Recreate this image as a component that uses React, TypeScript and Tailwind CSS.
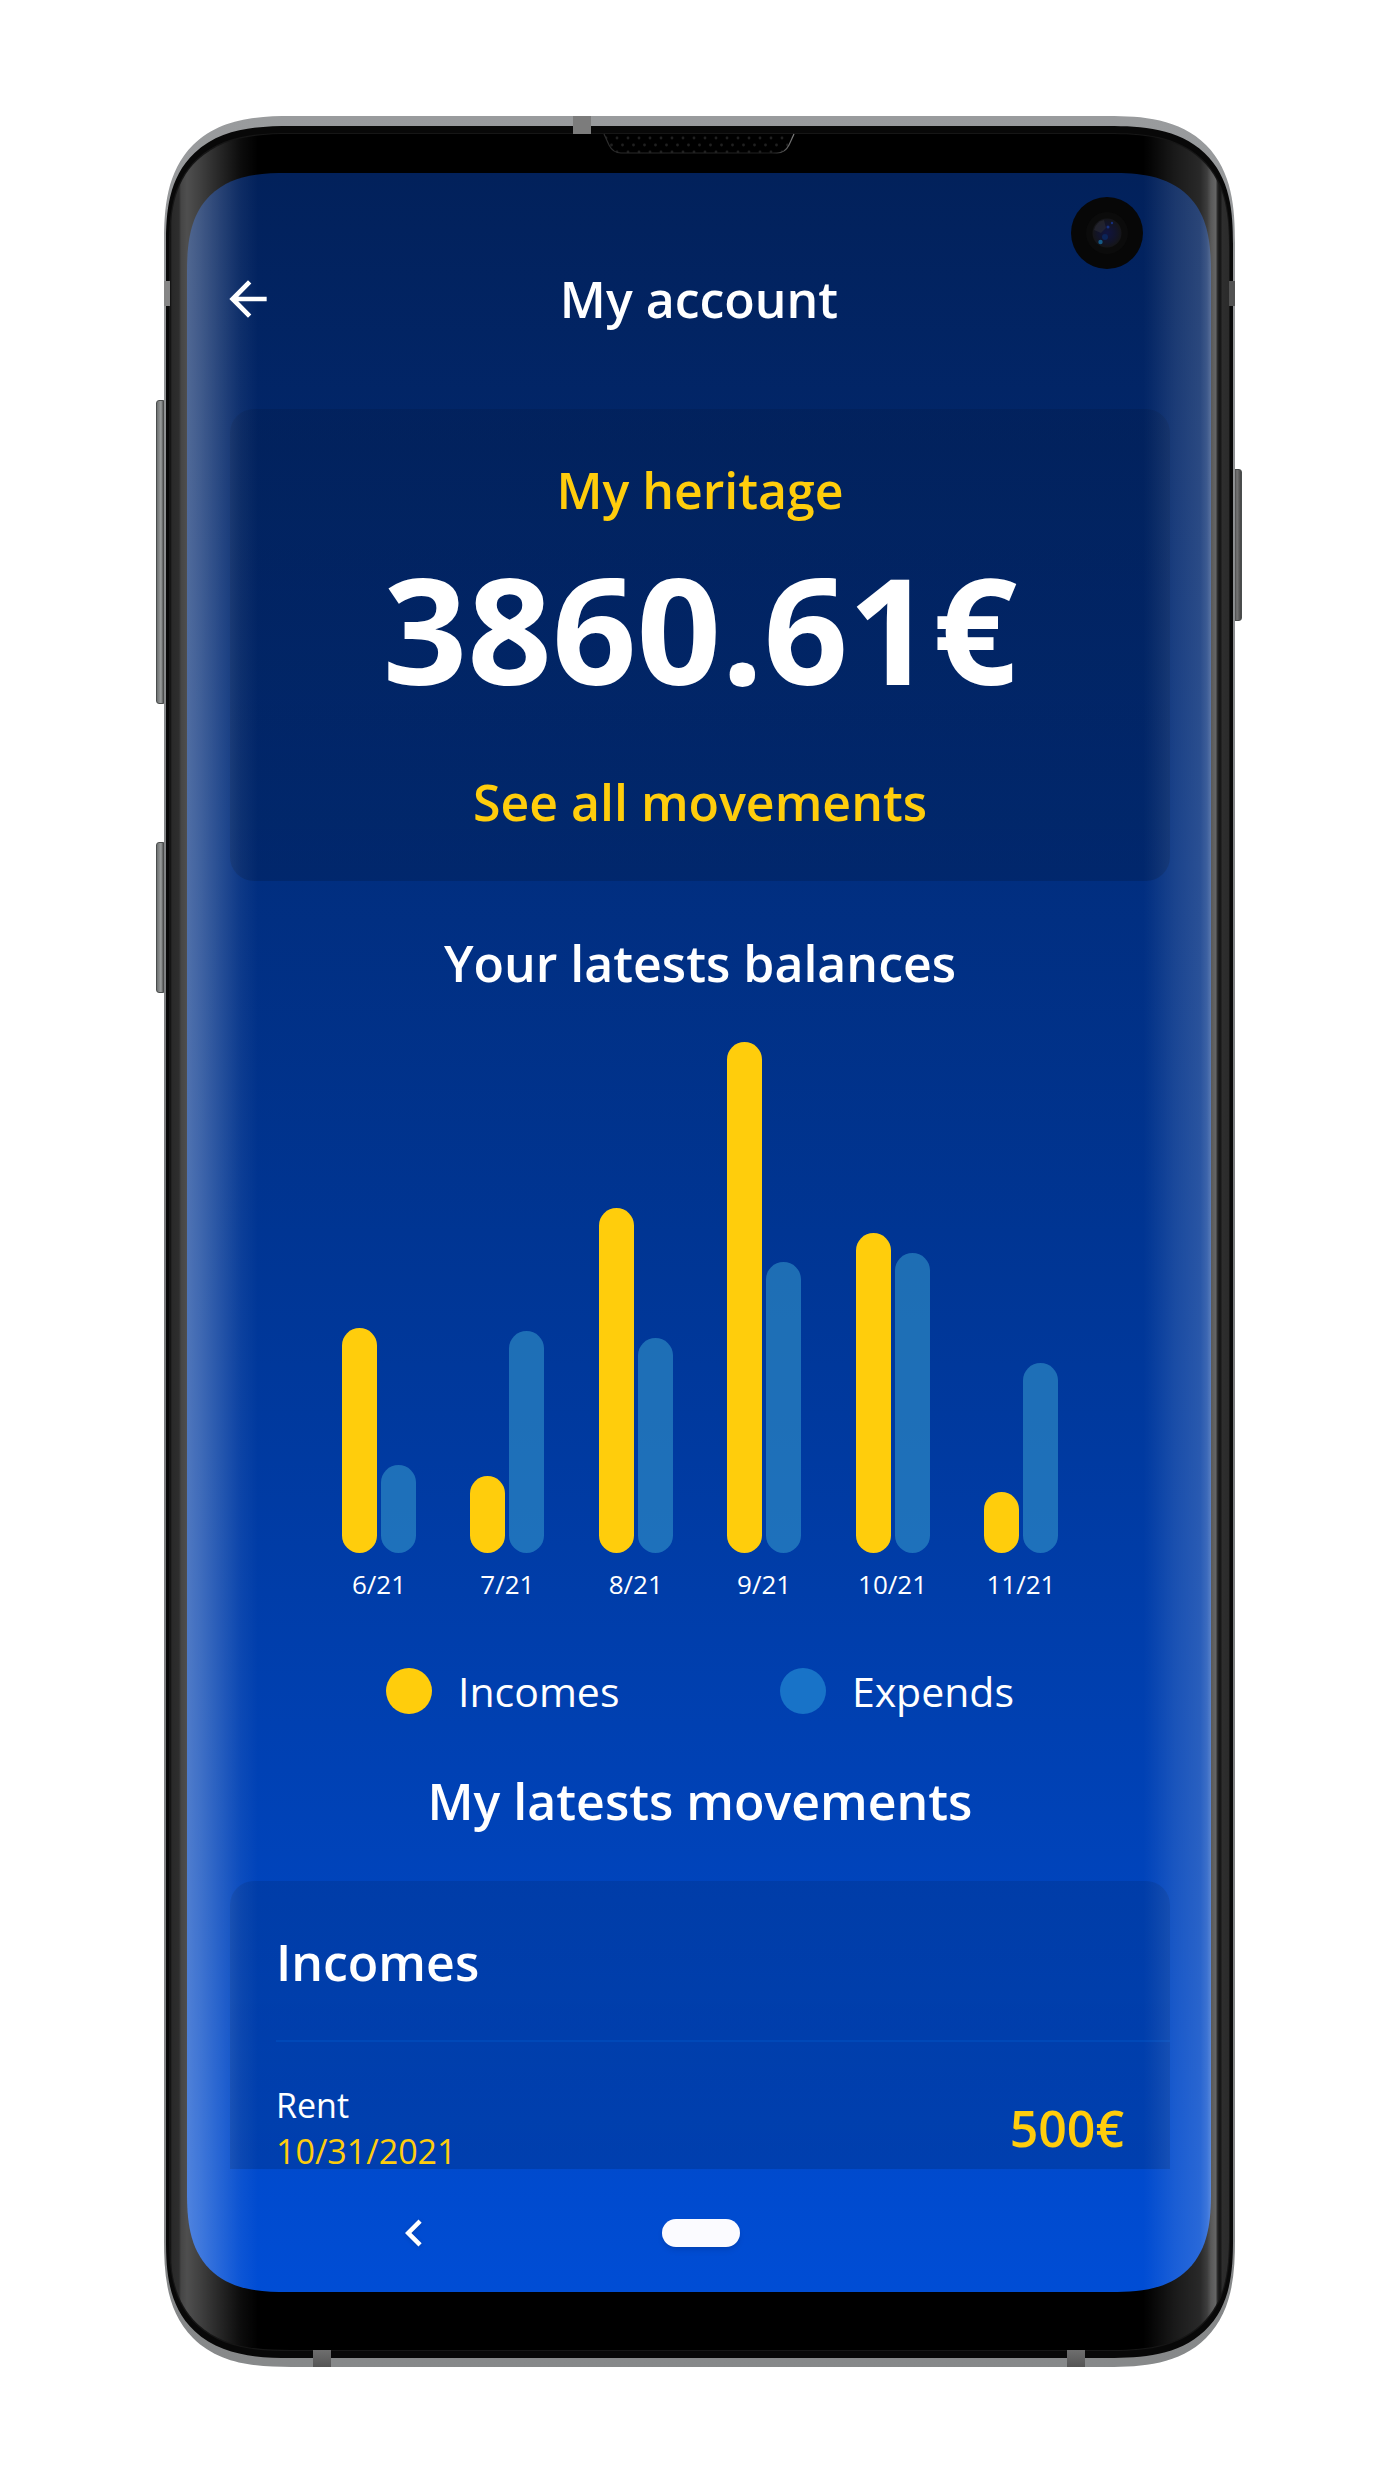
type Balance = { month: string; income: number; expend: number };

const balances: Balance[] = [
  { month: "6/21", income: 225, expend: 88 },
  { month: "7/21", income: 77, expend: 222 },
  { month: "8/21", income: 345, expend: 215 },
  { month: "9/21", income: 511, expend: 291 },
  { month: "10/21", income: 320, expend: 300 },
  { month: "11/21", income: 61, expend: 190 },
];

const heading = "text-[50px] leading-[72px] font-semibold";

function Header() {
  return (
    <header className="grid grid-cols-[56px_1fr_56px] items-center px-[33px] pt-[90px] pb-[74px]">
      <button type="button" aria-label="Back" className="size-14">
        <svg viewBox="0 0 24 24" className="size-14" fill="currentColor" aria-hidden="true">
          <path d="M20 11H7.83l5.59-5.59L12 4l-8 8 8 8 1.41-1.41L7.83 13H20v-2z" />
        </svg>
      </button>
      <h1 className={`${heading} text-center`}>My account</h1>
    </header>
  );
}

function HeritageCard() {
  return (
    <section className="flex flex-col items-center rounded-3xl bg-linear-to-b from-black/10 to-black/15 pt-[45px] pb-[43px]">
      <h2 className={`${heading} text-[#ffcd0c]`}>My heritage</h2>
      <p className="mt-[22px] text-[148px] leading-[160px] font-bold">3860.61€</p>
      <a href="#movements" className={`${heading} mt-[58px] text-[#ffcd0c]`}>
        See all movements
      </a>
    </section>
  );
}

function BalanceChart() {
  return (
    <section className="flex flex-col">
      <h2 className={`${heading} mt-[46px] text-center`}>Your latests balances</h2>
      <div className="mt-[43px] flex items-end justify-between px-28">
        {balances.map((b) => (
          <div key={b.month} className="flex w-[74px] flex-col items-center">
            <div className="flex w-full items-end justify-between">
              <div className="w-[35px] rounded-full bg-[#ffcd0c]" style={{ height: b.income }} />
              <div className="w-[35px] rounded-full bg-[#3295ca]/60" style={{ height: b.expend }} />
            </div>
            <span className="mt-[13px] text-[26px] leading-9 whitespace-nowrap">{b.month}</span>
          </div>
        ))}
      </div>
      <div className="mt-[61px] flex justify-between px-[156px] text-[41px] leading-[56px]">
        <div className="flex items-center gap-[26px]">
          <span className="size-[46px] rounded-full bg-[#ffcd0c]" />
          <span>Incomes</span>
        </div>
        <div className="flex items-center gap-[26px]">
          <span className="size-[46px] rounded-full bg-[#1873c8]" />
          <span>Expends</span>
        </div>
      </div>
    </section>
  );
}

function Movements() {
  return (
    <section id="movements">
      <h2 className={`${heading} mt-[46px] text-center`}>My latests movements</h2>
      <div className="mt-11 rounded-t-3xl bg-linear-to-b from-black/10 to-black/15 pt-[45px] pl-[46px]">
        <h3 className={heading}>Incomes</h3>
        <ul className="mt-[42px] border-t-2 border-[#0048b8]">
          <li className="flex items-center justify-between pt-[45px] pr-[46px]">
            <div className="flex flex-col gap-[10px] text-[34px] leading-9">
              <p>Rent</p>
              <p className="text-[#ffcd0c]">10/31/2021</p>
            </div>
            <span className={`${heading} text-[#ffcd0c]`}>500€</span>
          </li>
        </ul>
      </div>
    </section>
  );
}

function SystemNav() {
  return (
    <nav className="grid h-[123px] grid-cols-3 items-center justify-items-center pt-1 pr-20 pl-[84px]">
      <button type="button" aria-label="System back" className="size-[54px]">
        <svg viewBox="0 0 24 24" className="size-[54px] drop-shadow-sm" fill="currentColor" aria-hidden="true">
          <path d="M15.41 7.41L14 6l-6 6 6 6 1.41-1.41L10.83 12z" />
        </svg>
      </button>
      <button type="button" aria-label="Home" className="h-7 w-[78px] rounded-full bg-[#fbfbff] shadow-md" />
    </nav>
  );
}

function Speaker() {
  return (
    <svg
      viewBox="0 0 192 22"
      className="absolute top-[17px] left-[439px] h-[22px] w-48"
      fill="none"
      aria-hidden="true"
    >
      <defs>
        <pattern id="mesh" width="11" height="14" patternUnits="userSpaceOnUse">
          <circle cx="3" cy="5" r="1.4" fill="#202020" />
          <circle cx="8.500" cy="12" r="1.4" fill="#202020" />
        </pattern>
        <linearGradient id="rim" x1="0" x2="1" y1="0" y2="0">
          <stop offset="0" stopColor="#2c2c2c" />
          <stop offset="0.88" stopColor="#1e1e1e" />
          <stop offset="1" stopColor="#808080" />
        </linearGradient>
      </defs>
      <path d="M1 1l5 11q4 8 12 8H174q8 0 12-8l5-11" fill="url(#mesh)" stroke="url(#rim)" strokeWidth="1.200" />
    </svg>
  );
}

function Camera() {
  return (
    <svg viewBox="0 0 72 72" className="absolute top-[63px] right-[86px] size-[72px]" aria-hidden="true">
      <defs>
        <radialGradient id="lens" cx="0.5" cy="0.5" r="0.5">
          <stop offset="0" stopColor="#101440" />
          <stop offset="0.6" stopColor="#12142a" />
          <stop offset="1" stopColor="#151518" />
        </radialGradient>
      </defs>
      <circle cx="36" cy="36" r="36" fill="#070707" />
      <circle cx="36" cy="36" r="21" fill="#0b0b0b" />
      <circle cx="36" cy="36" r="14.500" fill="url(#lens)" />
      <path d="M23 33a13 13 0 0 1 10-10l2 8-5 5z" fill="#2b2b33" opacity="0.6" />
      <circle cx="34" cy="40" r="3" fill="#0b2458" />
      <circle cx="37" cy="30" r="1.500" fill="#16307c" />
      <circle cx="41" cy="26" r="1.200" fill="#16307c" />
      <circle cx="29.500" cy="45" r="2.200" fill="#155a86" />
    </svg>
  );
}

/* Side keys along the device edge. */
function SideKeys() {
  const key = "absolute w-[10px] rounded-[3px] border border-[#4a4d4d]";
  const leftKey = "bg-linear-to-r from-[#6d7070] via-[#9a9d9d] to-[#222]";
  return (
    <>
      <span className={`${key} ${leftKey} top-[284px] -left-2 h-[304px]`} />
      <span className={`${key} ${leftKey} top-[726px] -left-2 h-[151px]`} />
      <span className={`${key} top-[353px] -right-[7px] h-[152px] bg-linear-to-r from-[#222] via-[#777] to-[#444]`} />
    </>
  );
}

function AntennaBands() {
  return (
    <>
      <span className="absolute top-0 left-[409px] h-[18px] w-[18px] bg-[#7c7c7c]" />
      <span className="absolute top-[165px] left-0 h-[25px] w-[6px] bg-[#868686]" />
      <span className="absolute top-[165px] right-0 h-[25px] w-[6px] bg-[#525252]" />
      <span className="absolute bottom-0 left-[149px] h-[17px] w-[18px] bg-linear-to-b from-[#6e6e6e] to-[#555]" />
      <span className="absolute right-[150px] bottom-0 h-[17px] w-[18px] bg-linear-to-b from-[#6e6e6e] to-[#555]" />
    </>
  );
}

/* Light falling on the curved left and right edges of the glass. */
function GlassReflections() {
  return (
    <>
      <div className="pointer-events-none absolute inset-y-0 left-0 w-[88px] bg-[linear-gradient(to_right,#ffffff0d_0px,#ffffff29_2px,#ffffff2e_9px,#ffffff45_11px,#ffffff4f_17px,#ffffff40_30px,#ffffff26_50px,#ffffff0d_70px,#ffffff00_88px)]" />
      <div className="pointer-events-none absolute inset-y-0 right-0 w-[86px] bg-[linear-gradient(to_left,#ffffff2b_0px,#ffffff2e_7px,#ffffff17_8px,#ffffff17_10px,#ffffff33_12px,#ffffff66_13px,#ffffff59_18px,#ffffff3d_22px,#ffffff29_29px,#ffffff1a_54px,#ffffff05_79px,#ffffff00_86px)]" />
    </>
  );
}

export default function App() {
  return (
    <main className="min-h-screen bg-white pt-[116px] pr-[143px] pb-[113px] pl-[164px] font-['Open_Sans',sans-serif] text-white">
      <div className="relative">
        <SideKeys />
        <div className="relative rounded-[127px] bg-linear-to-b from-[#999b9d] via-[#77797b] to-[#87898a] px-[2px] pt-[10px] pb-[9px] [corner-shape:superellipse(1.42)]">
          <div className="rounded-[125px/118px] bg-[#080808] px-1 py-2 [corner-shape:superellipse(1.42)]">
            <div className="relative overflow-hidden rounded-[121px/114px] bg-black pt-[39px] pr-[18px] pb-[58px] pl-[17px] shadow-[0_0_0_1px_#161616] [corner-shape:superellipse(1.42)]">
              <div className="overflow-hidden rounded-[100px] bg-linear-to-b from-[#02215b] via-[#003593] to-[#004dd5] [corner-shape:superellipse(1.42)]">
                <Header />
                <div className="pr-[41px] pl-[43px]">
                  <HeritageCard />
                  <BalanceChart />
                  <Movements />
                </div>
                <SystemNav />
              </div>
              <GlassReflections />
              <Camera />
            </div>
          </div>
          <AntennaBands />
          <Speaker />
        </div>
      </div>
    </main>
  );
}
